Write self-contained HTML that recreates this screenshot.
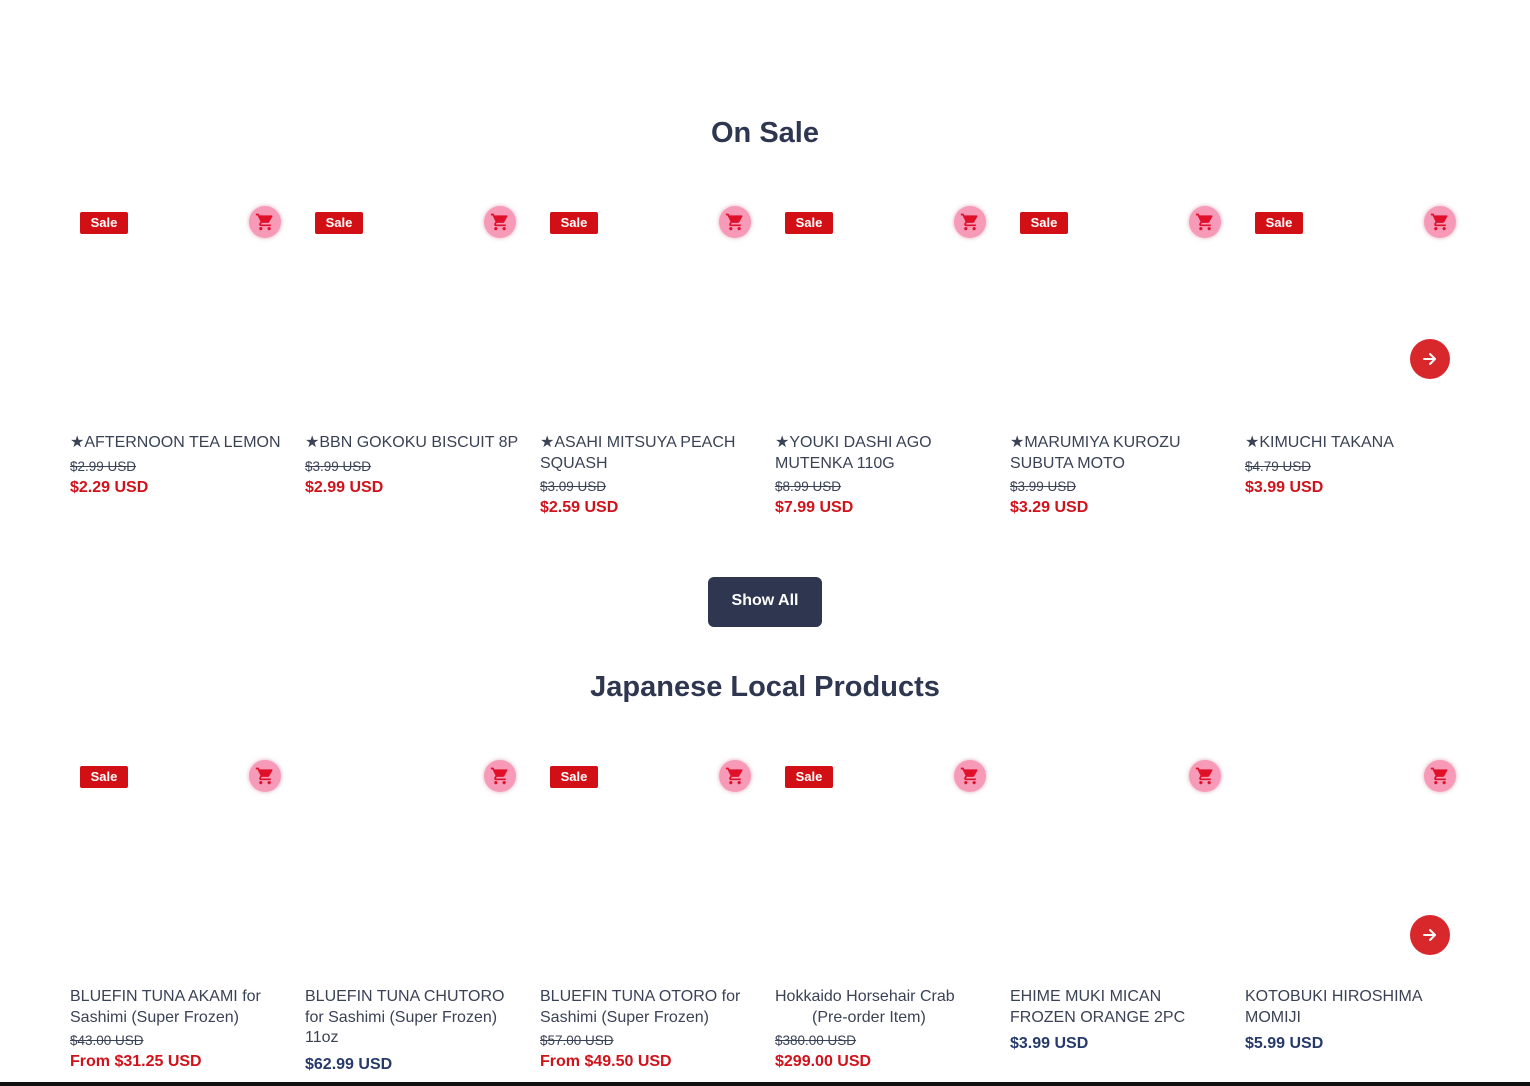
<!DOCTYPE html>
<html><head><meta charset="utf-8"><style>
*{margin:0;padding:0;box-sizing:border-box}
body{width:1530px;height:1086px;background:#fff;position:relative;overflow:hidden;font-family:"Liberation Sans",sans-serif;color:#384158}
.h{position:absolute;left:0;width:1530px;text-align:center;font-size:29px;font-weight:bold;color:#2e3650}
.sale{position:absolute;width:48px;height:22px;background:#d10f14;color:#fff;font-size:13px;font-weight:bold;text-align:center;line-height:22px;border-radius:2px}
.cart{position:absolute;width:32px;height:32px;border-radius:50%;background:#f79ab8;box-shadow:0 0 4px rgba(200,80,120,.5)}
.cart svg{position:absolute;left:6px;top:6px}
.t{position:absolute;font-size:16px;line-height:20.5px;color:#3a4256;width:220px}
.o{position:absolute;font-size:13.5px;text-decoration:line-through;color:#3a4256}
.p{position:absolute;font-size:16px;font-weight:bold;color:#d0121b}
.n{position:absolute;font-size:16px;font-weight:bold;color:#263a6a}
.arr{position:absolute;width:40px;height:40px;border-radius:50%;background:#d8282c}
.arr svg{position:absolute;left:10px;top:10px}
.btn{position:absolute;left:708px;top:577px;width:114px;height:50px;background:#2e3650;border-radius:6px;color:#fff;font-weight:bold;font-size:16px;text-align:center;line-height:48px}
</style></head><body>
<div class="h" style="top:117px">On Sale</div>
<div class="h" style="top:671px">Japanese Local Products</div>
<div class="btn">Show All</div>
<div style="position:absolute;left:0;top:1082px;width:1530px;height:4px;background:#111"></div>
<div id="c"></div>
<script>
var cart='<svg width="20" height="20" viewBox="0 0 24 24"><path fill="#e0102a" d="M7 18c-1.1 0-2 .9-2 2s.9 2 2 2 2-.9 2-2-.9-2-2-2zM1 2v2h2l3.6 7.6-1.4 2.4c-.1.3-.2.6-.2 1 0 1.1.9 2 2 2h12v-2H7.4c-.1 0-.2-.1-.2-.2v-.1l.9-1.7h7.4c.8 0 1.4-.4 1.7-1l3.6-6.5c.1-.2.2-.3.2-.5 0-.6-.4-1-1-1H5.2l-.9-2H1zm16 16c-1.1 0-2 .9-2 2s.9 2 2 2 2-.9 2-2-.9-2-2-2z"/></svg>';
var arr='<svg width="20" height="20" viewBox="0 0 20 20"><path d="M4 10h11M10 5l5 5-5 5" stroke="#fff" stroke-width="2" fill="none" stroke-linecap="round" stroke-linejoin="round"/></svg>';
var s1=[["★AFTERNOON TEA LEMON","$2.99 USD","$2.29 USD",1],["★BBN GOKOKU BISCUIT 8P","$3.99 USD","$2.99 USD",1],["★ASAHI MITSUYA PEACH SQUASH","$3.09 USD","$2.59 USD",2],["★YOUKI DASHI AGO MUTENKA 110G","$8.99 USD","$7.99 USD",2],["★MARUMIYA KUROZU SUBUTA MOTO","$3.99 USD","$3.29 USD",2],["★KIMUCHI TAKANA","$4.79 USD","$3.99 USD",1]];
var s2=[["BLUEFIN TUNA AKAMI for Sashimi (Super Frozen)","$43.00 USD","From $31.25 USD",1],["BLUEFIN TUNA CHUTORO for Sashimi (Super Frozen) 11oz",null,"$62.99 USD",0],["BLUEFIN TUNA OTORO for Sashimi (Super Frozen)","$57.00 USD","From $49.50 USD",1],["Hokkaido Horsehair Crab<br><span style=\"padding-left:37px\">(Pre-order Item)</span>","$380.00 USD","$299.00 USD",1],["EHIME MUKI MICAN FROZEN ORANGE 2PC",null,"$3.99 USD",0],["KOTOBUKI HIROSHIMA MOMIJI",null,"$5.99 USD",0]];
var h='';
function sec(arrs,top){
 arrs.forEach(function(d,i){
  var x=70+235*i;
  if(d[1]!=null || top<500) h+='<div class="sale" style="left:'+(x+10)+'px;top:'+(top+1)+'px">Sale</div>';
  h+='<div class="cart" style="left:'+(x+179)+'px;top:'+(top-5)+'px">'+cart+'</div>';
  var ty=top+222;
  h+='<div class="t" style="left:'+x+'px;top:'+ty+'px">'+d[0]+'</div>';
  if(top<500){
   var oy=d[3]==1?ty+26:ty+46;
   h+='<div class="o" style="left:'+x+'px;top:'+oy+'px">'+d[1]+'</div>';
   h+='<div class="p" style="left:'+x+'px;top:'+(oy+20)+'px">'+d[2]+'</div>';
  } else {
   var lines=(i==1)?3:2;
   if(d[1]!=null){
    h+='<div class="o" style="left:'+x+'px;top:'+(ty+46)+'px">'+d[1]+'</div>';
    h+='<div class="p" style="left:'+x+'px;top:'+(ty+66)+'px">'+d[2]+'</div>';
   } else {
    h+='<div class="n" style="left:'+x+'px;top:'+(ty+(lines==3?69:48))+'px">'+d[2]+'</div>';
   }
  }
 });
}
sec(s1,211);sec(s2,765);
h+='<div class="arr" style="left:1410px;top:339px">'+arr+'</div>';
h+='<div class="arr" style="left:1410px;top:915px">'+arr+'</div>';
document.getElementById('c').innerHTML=h;
</script>
</body></html>
